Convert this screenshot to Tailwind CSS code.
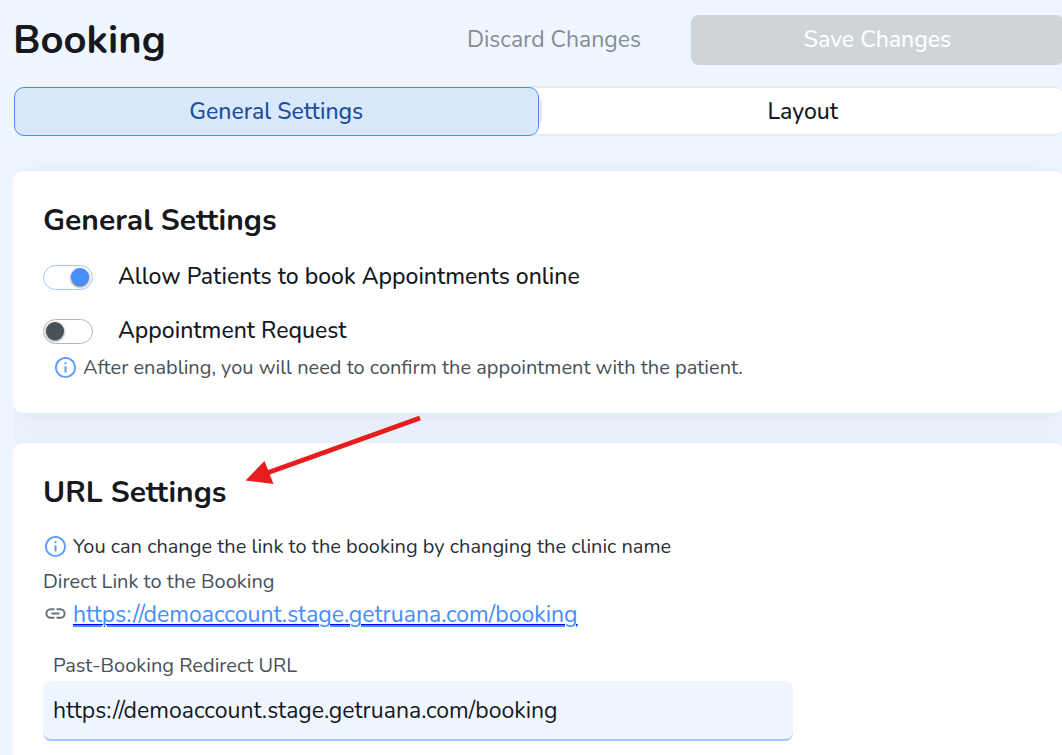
<!DOCTYPE html>
<html lang="en">
  <head>
    <meta charset="UTF-8" />
    <meta name="viewport" content="width=device-width, initial-scale=1.0" />
    <title>Booking</title>
    <script src="https://cdn.jsdelivr.net/npm/@tailwindcss/browser@4"></script>
  </head>
  <body
    class="min-h-screen overflow-x-hidden bg-[#f0f6ff] font-[Nunito,Lato,sans-serif] text-[23px] leading-[30px] text-[#16181d]"
  >
    <div class="flex min-h-screen">
      <div class="w-[13px] shrink-0 bg-linear-to-r from-[#ecf4fd] to-[#f0f6ff]"></div>
      <main class="-mr-0.5 flex min-w-0 grow flex-col">
        <!-- Header -->
        <header class="flex items-center bg-linear-to-b from-[#ecf4fd] to-[#f0f6ff] to-30% pt-[15px]">
          <h1 class="grow text-[40px] leading-[50px] font-bold">Booking</h1>
          <button type="button" class="mr-3 h-[50px] w-[250px] text-[#868d95]">
            Discard Changes
          </button>
          <button
            type="button"
            class="h-[50px] w-[373px] rounded-lg bg-[#ced4d8] font-medium text-white"
            disabled
          >
            Save Changes
          </button>
        </header>

        <!-- Tabs -->
        <nav
          class="mt-[21px] ml-px flex h-[50px] rounded-[10px] border-y-2 border-[#e9ecef] bg-white font-medium"
        >
          <button
            type="button"
            class="-mt-px -mb-0.5 grow basis-0 rounded-[10px] border border-[#468ef9] bg-[#d9e9fc] text-[#214d9e]"
          >
            General Settings
          </button>
          <span class="my-auto h-6 w-[3px] rounded-r-sm bg-[#e9ecef]"></span>
          <button type="button" class="-mt-px -mb-0.5 grow basis-0">Layout</button>
        </nav>

        <div class="flex grow flex-col gap-[30px] overflow-hidden pt-[35px]">
          <!-- General settings -->
          <section
            class="rounded-[10px] bg-white px-[30px] py-[30px] shadow-[0_6px_30px_rgba(60,70,130,0.1)]"
          >
            <h2 class="text-[30px] leading-[40px] font-bold">General Settings</h2>
            <div class="mt-[21px] font-medium">
              <input id="allowOnline" type="checkbox" checked class="sr-only" />
              <label for="allowOnline" class="flex items-center gap-[25px]">
                <span
                  class="flex h-[25px] w-[50px] items-center justify-end rounded-full border border-[#a2c8fc] pr-[3px]"
                >
                  <span class="size-[18px] rounded-full bg-[#468ef9] shadow-sm shadow-black/50"></span>
                </span>
                Allow Patients to book Appointments online
              </label>
            </div>
            <div class="mt-6 font-medium">
              <input id="appRequest" type="checkbox" class="sr-only" />
              <label for="appRequest" class="flex items-center gap-[25px]">
                <span
                  class="flex h-[25px] w-[50px] items-center rounded-full border border-[#b3b6ba] pl-[2px]"
                >
                  <span class="size-[18px] rounded-full bg-[#495057] shadow-sm shadow-black/50"></span>
                </span>
                Appointment Request
              </label>
            </div>
            <p class="mt-2 mb-px ml-3 flex items-center gap-1.5 text-[20px] leading-[28px] text-[#495057]">
              <svg class="size-[22px] shrink-0" viewBox="0 0 22 22" fill="none" stroke="#5c9cfb">
                <circle cx="10.500" cy="10.500" r="9.600" stroke-width="1.900" />
                <path d="M10.500 9.200V15.500" stroke-width="2" />
                <path d="M10.500 5.200V7.200" stroke-width="2" />
              </svg>
              After enabling, you will need to confirm the appointment with the patient.
            </p>
          </section>

          <!-- URL settings -->
          <section
            class="relative grow rounded-t-[10px] bg-white px-[30px] pt-[30px] shadow-[0_6px_30px_rgba(60,70,130,0.1)]"
          >
            <h2 class="text-[30px] leading-[40px] font-bold">URL Settings</h2>
            <p class="mt-5 ml-0.5 flex items-center gap-1.5 text-[20px] leading-[28px] text-[#2b3035]">
              <svg class="size-[22px] shrink-0" viewBox="0 0 22 22" fill="none" stroke="#5c9cfb">
                <circle cx="10.500" cy="10.500" r="9.600" stroke-width="1.900" />
                <path d="M10.500 9.200V15.500" stroke-width="2" />
                <path d="M10.500 5.200V7.200" stroke-width="2" />
              </svg>
              You can change the link to the booking by changing the clinic name
            </p>
            <p class="mt-[7px] text-[20px] leading-[28px] text-[#495057]">
              Direct Link to the Booking
            </p>
            <div class="mt-1 ml-0.5 flex items-center gap-1.5">
              <svg class="size-[22px] shrink-0" viewBox="0 0 22 22" fill="none" stroke="#6b7178" stroke-width="2">
                <path d="M9.500 5.200H5.700a4.300 4.300 0 0 0 0 8.600H9.500M11.500 5.200h3.800a4.300 4.300 0 0 1 0 8.600H11.500M6.500 9.500h8" />
              </svg>
              <a
                href="https://demoaccount.stage.getruana.com/booking"
                class="underline decoration-[#0000ee] decoration-1 underline-offset-2"
                ><span class="text-[#468ef9] underline decoration-2 underline-offset-3">https://demoaccount.stage.getruana.com/booking</span></a
              >
            </div>
            <label
              for="redirectUrl"
              class="mt-[22px] ml-[10px] block text-[20px] leading-[28px] text-[#495057]"
              >Past-Booking Redirect URL</label
            >
            <input
              id="redirectUrl"
              type="text"
              value="https://demoaccount.stage.getruana.com/booking"
              class="mt-px h-[60px] w-full max-w-[750px] rounded-lg border-b-2 border-[#a2c8fc] bg-[#f0f6ff] px-[10px] outline-none"
            />
            <!-- Pointer to the section title -->
            <svg
              class="absolute -top-[30px] left-[230px] h-[76px] w-[182px]"
              viewBox="0 0 182 76"
            >
              <path d="M177 5L24 60" stroke="#e81c1c" stroke-width="5" />
              <path d="M2.500 67.500L21.500 48L30.500 71Z" fill="#e81c1c" />
            </svg>
          </section>
        </div>
      </main>
    </div>
  </body>
</html>
